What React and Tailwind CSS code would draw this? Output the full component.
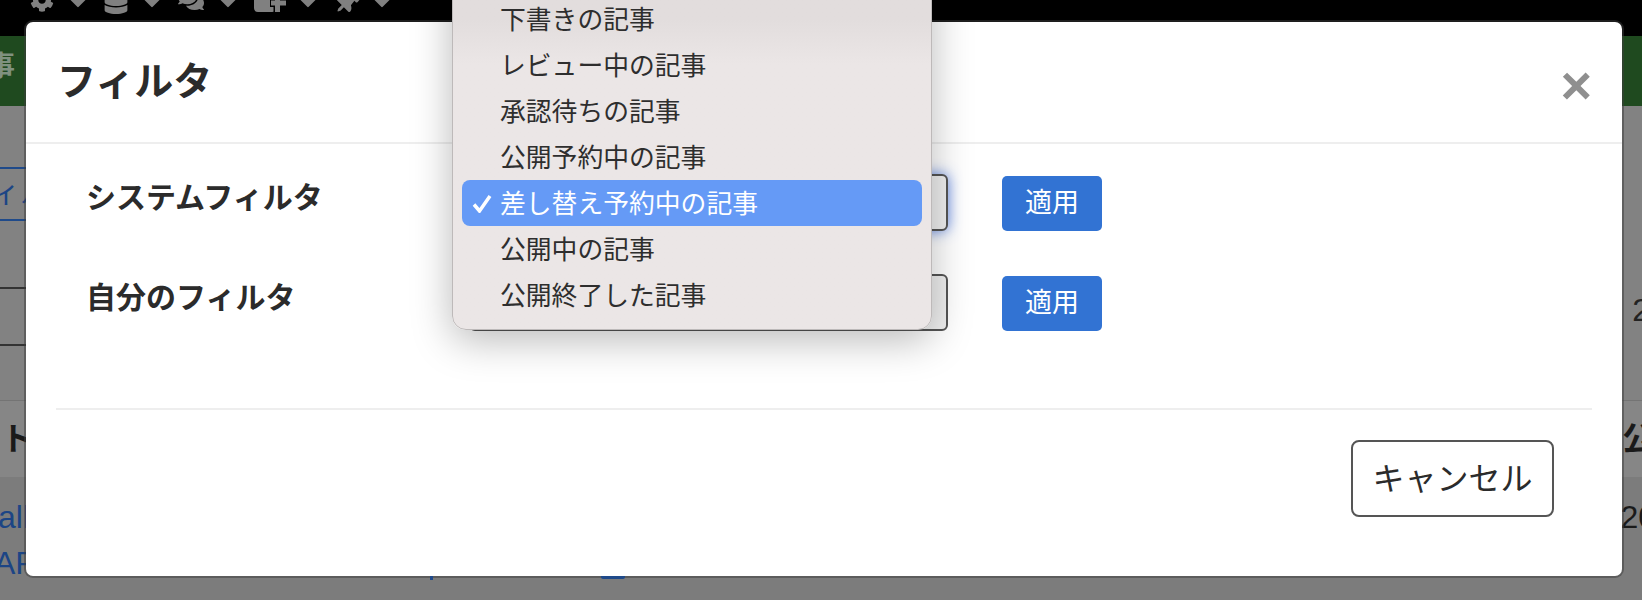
import React from 'react';
import { FaCog, FaDatabase, FaComments, FaThumbtack } from 'react-icons/fa';

const statusOptions = [
  '下書きの記事',
  'レビュー中の記事',
  '承認待ちの記事',
  '公開予約中の記事',
  '差し替え予約中の記事',
  '公開中の記事',
  '公開終了した記事',
];

const Caret = () => <span className="mt-[-7px] mr-[20px] ml-[18px] block h-[12px] w-[12px] rotate-45 rounded-[1px] bg-[#808080]" />;

const FolderPlus = () => (
  <svg className="mt-[-12px] h-[24px] w-[32px]" viewBox="0 0 32 24" fill="currentColor">
    <rect x="0" y="0" width="22" height="24" rx="4" />
    <path d="M23.5 6 V24 M16 15 H32" stroke="black" strokeWidth="8" />
    <path d="M23.5 8 V24 M17 15 H32" stroke="currentColor" strokeWidth="5" />
  </svg>
);

const TopBar = () => (
  <div className="flex h-[36px] items-start overflow-hidden bg-black pl-[30px] text-[#808080]">
    <FaCog className="mt-[-12px] h-[24px] w-[24px]" />
    <Caret />
    <FaDatabase className="mt-[-12px] h-[26px] w-[24px]" />
    <Caret />
    <FaComments className="mt-[-12px] h-[24px] w-[26px]" />
    <Caret />
    <FolderPlus />
    <span className="ml-[-2px]"><Caret /></span>
    <FaThumbtack className="mt-[-9px] h-[24px] w-[24px] rotate-45" />
    <Caret />
  </div>
);

const BackgroundPage = () => (
  <div className="flex h-[600px] flex-col bg-[#7c7c7c]">
    <TopBar />
    <div className="flex h-[70px] items-center overflow-hidden bg-[#1f4a1f] pb-[8px] text-[28px] font-bold text-[#7f917f]">
      <span className="ml-[-13px]">事</span>
    </div>
    <div className="flex h-[294px] flex-col bg-[#828282] pt-[61px]">
      <div className="flex h-[54px] w-[40px] items-center border-y-2 border-[#1f4a8a] text-[29px] text-[#1c4585]">
        <span className="ml-[-9px] whitespace-nowrap">ィル</span>
      </div>
      <div className="mt-[66px] flex items-start justify-between text-[32px] text-[#222]">
        <div className="h-[59px] w-[40px] border-y-2 border-[#333]" />
        <span className="mt-[-1px] mr-[-8px]">2</span>
      </div>
    </div>
    <div className="flex h-[77px] items-center justify-between border-t border-[#747474] bg-[#868686] text-[32px] font-bold text-[#1a1a1a]">
      <span className="ml-[1px]">ト</span>
      <span className="mr-[-12px]">公</span>
    </div>
    <div className="flex items-center justify-between pt-[20px] text-[32px] leading-[40px] text-[#1c4585]">
      <span className="ml-[-2px]">all</span>
      <span className="mr-[-14px] text-[#1a1a1a]">20</span>
    </div>
    <div className="mt-[6px] text-[32px] leading-[40px] text-[#1c4585]">
      <span className="ml-[-6px]">AP</span>
    </div>
  </div>
);

const FilterRow = ({ label, focused }) => (
  <div className="flex h-[100px] items-start">
    <div className="w-[443px] pt-[3px] pl-[60px] text-[30px] leading-[42px] font-bold text-[#2b2b2b]">{label}</div>
    <div className={`h-[57px] w-[479px] rounded-[6px] border-2 border-[#555] bg-[#f0f0f0] ${focused ? 'shadow-[0_0_14px_rgba(50,100,220,0.8)]' : ''}`} />
    <button className="mt-[2px] ml-[54px] h-[55px] w-[100px] rounded-[5px] bg-[#3273d3] text-[27px] text-white">適用</button>
  </div>
);

const StatusMenu = () => (
  <div className="absolute top-[-62px] left-[426px] w-[480px] rounded-b-[14px] border border-[#bdb9b9] bg-gradient-to-b from-[#e2dddd] from-[16%] to-[#ebe6e6] to-[28%] px-[9px] pt-[35px] pb-[11px] text-[25.8px] text-[#2e2e2e] shadow-[0_10px_40px_rgba(0,0,0,0.28)]">
    {statusOptions.map((name, i) => (
      <div
        key={name}
        className={`flex h-[46px] items-center rounded-[8px] pt-[3px] pl-[38px] ${i === 4 ? 'relative bg-[#659af6] text-white' : ''}`}
      >
        {i === 4 && (
          <svg className="absolute top-[14px] left-[10px] h-[19px] w-[20px]" viewBox="0 0 20 19" fill="none">
            <path d="M2 10.5 L7.5 17 L18 2" stroke="white" strokeWidth="3.5" />
          </svg>
        )}
        {name}
      </div>
    ))}
  </div>
);

const FilterModal = () => (
  <div className="absolute top-[22px] left-[26px] flex h-[554px] w-[1596px] flex-col rounded-[7px] bg-white shadow-[0_0_0_2px_rgba(60,60,60,0.5)]">
    <div className="flex h-[122px] items-start justify-between border-b-2 border-[#eeeeee] pr-[30px] pl-[31px]">
      <h1 className="mt-[32px] text-[39px] leading-[56px] font-bold text-[#2b2b2b]">フィルタ</h1>
      <span className="mt-[30px] font-['Liberation_Sans',sans-serif] text-[54px] leading-[66px] font-bold text-[#8f8f8f]">×</span>
    </div>
    <div className="pt-[30px]">
      <FilterRow label="システムフィルタ" focused />
      <FilterRow label="自分のフィルタ" />
    </div>
    <div className="mx-[30px] mt-[34px] flex justify-end border-t-2 border-[#eeeeee] pt-[30px] pr-[38px]">
      <button className="h-[77px] w-[203px] rounded-[8px] border-2 border-[#555] text-[32px] text-[#2b2b2b]">キャンセル</button>
    </div>
    <StatusMenu />
    <span className="absolute top-[554px] left-[575px] h-[3px] w-[24px] rounded-b-[2px] bg-[#1f4a8a]" />
    <span className="absolute top-[554px] left-[404px] h-[4px] w-[3px] bg-[#1f4a8a]" />
  </div>
);

export default function App() {
  return (
    <div className="relative h-[600px] overflow-hidden font-['Liberation_Sans','Noto_Sans_CJK_JP',sans-serif]">
      <BackgroundPage />
      <FilterModal />
    </div>
  );
}
